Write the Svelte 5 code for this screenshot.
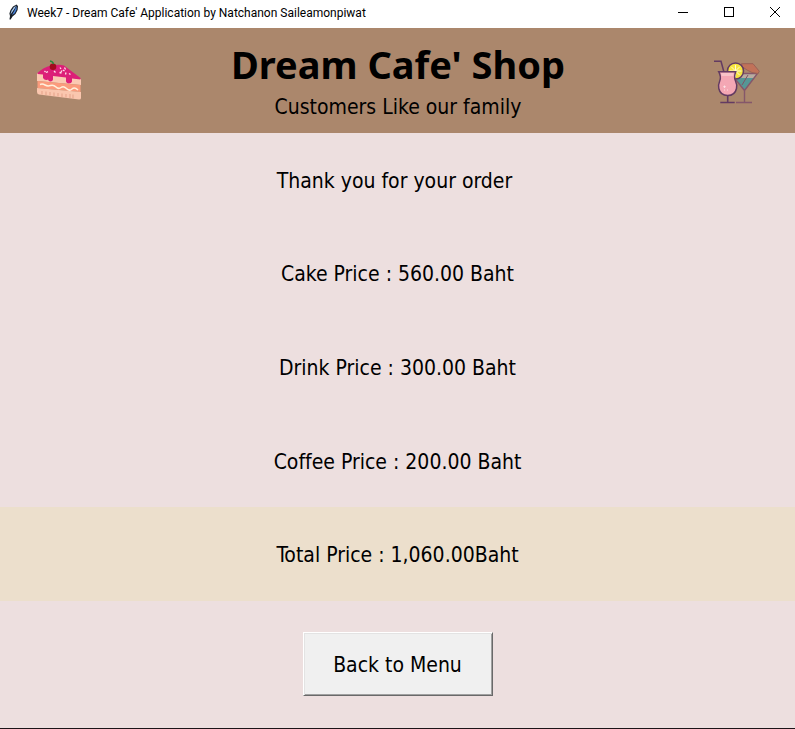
<script>
  const lines = [
    'Thank you for your order ',
    'Cake Price : 560.00 Baht',
    'Drink Price : 300.00 Baht',
    'Coffee Price : 200.00 Baht',
  ];
</script>

<div class="window">
  <div class="titlebar">
    <svg class="feather" viewBox="0 0 16 16" aria-hidden="true">
      <path d="M3.500 15.500 4 12 3.400 9.500 4.500 6 7 2.500 10.500 .4 12 2 11.600 6 9.500 10 6.500 12.500 4.700 15.500Z" fill="#1a2028" />
      <path d="M4.500 10.500 5.500 6.800 8 3.200 10 1.600 8.600 5Z" fill="#a9cdf7" />
      <path d="M5.600 11.300 8.200 6.400 10.600 1.800 10.600 5.500 8.700 9.300Z" fill="#4680d8" />
      <path d="M4.200 15 6 10 9 4.500" fill="none" stroke="#10151c" stroke-width=".6" />
    </svg>
    <span class="caption">Week7 - Dream Cafe' Application by Natchanon Saileamonpiwat</span>
    <div class="controls">
      <button aria-label="Minimize"><svg viewBox="0 0 10 10" shape-rendering="crispEdges"><path d="M0 5.500H10" /></svg></button>
      <button aria-label="Maximize"><svg viewBox="0 0 10 10" shape-rendering="crispEdges"><path d="M.5 .5H9.500V9.500H.5Z" /></svg></button>
      <button aria-label="Close"><svg viewBox="0 0 10 10"><path d="M0 0 10 10M10 0 0 10" /></svg></button>
    </div>
  </div>

  <header>
    <svg class="art" viewBox="0 0 60 56" aria-hidden="true">
      <path d="M7 21 51 27V33L7 29Z" fill="#fbc9b2" />
      <path d="M7.500 29 50.500 33V40L7.500 36Z" fill="#fb9b7c" />
      <path d="M10 32.500Q12.500 31.500 15 33T20.500 33.500T26 35T31 35.500T36.500 36.500T42 37T48 38" fill="none" stroke="#fff0dc" stroke-width="1.500" />
      <path d="M7 36 51 40V46Q51 47.500 49 47.500L9 42.500Q7 42 7 40Z" fill="#fac6ae" />
      <path d="M12 39v3.500M16 39.500v3.500M20 40v3.500M24 40.500v3.500M28 41v3.500M32 41.500v3.500M36 42v3.500M40 42v4M43 42.500v4" stroke="#e8a88f" stroke-width="1.200" />
      <path d="M7.500 21C11 17.500 16 14.500 22 13.500Q29 12 34 13.500L50.500 26V27.500L42 26.500V29.500Q41.500 31.500 39 31.500T36 29.500V25.500L23 24V27.500Q22.500 29.500 20.500 29.500T18 27.500Q15 29 13 26V22.500L7.500 22Z" fill="#dc1f78" />
      <path d="M16 20.500l2-.8M14.500 19l1 1M24 19l1.500 1.500M30 15.500l1 1.500M33 18l1.500 1M29.500 20.500l2 .5M34.500 15.500l1 2M36 20.500l-.5 2M32 18.500l-1 1.500M39 21.500l1.500 1" stroke="#ffe1ec" stroke-width="1.300" />
      <circle cx="23" cy="14.800" r="3.300" fill="#a30a1e" />
      <path d="M23.500 12Q23 9.500 20 9" fill="none" stroke="#24883b" stroke-width="1.400" />
    </svg>
    <div class="brand">
      <h1>Dream Cafe' Shop</h1>
      <p>Customers Like our family</p>
    </div>
    <svg class="art" viewBox="0 0 60 56" aria-hidden="true">
      <path d="M31 22H51L38.500 38.500Z" fill="#b9aca0" />
      <path d="M31 26H48.500L38.500 38.500 31 29Z" fill="#569795" />
      <path d="M36 33 42 23" fill="none" stroke="#805263" />
      <path d="M30 21.500H51.500L38.500 38.500 30 28M38.500 38V50" fill="none" stroke="#85576a" stroke-width="1.400" />
      <path d="M35.500 11.700H47L53.300 19.300 52 21.500 46 20.500Q42 19 36.500 15Z" fill="#c17259" stroke="#9a6257" stroke-width="1" />
      <path d="M30 50.500H46" stroke="#85576a" stroke-width="1.500" />
      <circle cx="29.500" cy="19" r="8" fill="#f5e43f" stroke="#633b62" stroke-width="1.500" />
      <path d="M29.500 13v12M23.500 19h12M25.300 14.800l8.400 8.400M33.700 14.800l-8.400 8.400" stroke="#fffad0" />
      <path d="M8 9.300H15L17.800 19.500" fill="none" stroke="#633b62" stroke-width="1.500" />
      <path d="M12.700 19.700H29.700C28.500 23 28 26 29.500 29C31 32 31 34 30.500 36.500C29.500 41 26 43.500 21.700 43.500S13.800 41 12.800 36.500C12.300 34 12.400 32 13.700 29C15 26 14.500 23 12.700 19.700Z" fill="#f4a7b4" stroke="#633b62" stroke-width="1.500" />
      <path d="M15 21H27.500L27 24H15.600Z" fill="#f8c3c8" />
      <path d="M18.500 33.500v2.500M17.200 34.700h2.600M21.500 37.500v1M18.500 37.500v1" stroke="#fde3e6" stroke-width=".9" />
      <path d="M21.700 43V50M14.300 50.500H28.700" fill="none" stroke="#633b62" stroke-width="1.600" />
    </svg>
  </header>

  <main>
    {#each lines as line}
      <p class="row">{line}</p>
    {/each}
    <p class="row total">Total Price : 1,060.00Baht</p>
    <div class="actions">
      <button class="back">Back to Menu</button>
    </div>
  </main>
</div>

<style>
  .window {
    display: flex;
    flex-direction: column;
    box-sizing: border-box;
    min-height: 100vh;
    border-bottom: 1px solid #1c1418;
    background: #eddfdf;
    color: #000;
    font-family: Tahoma, 'DejaVu Sans Condensed', 'DejaVu Sans', sans-serif;
    font-size: 21px;
    font-variant-ligatures: none;
    line-height: 26px;
  }
  .titlebar {
    display: flex;
    align-items: center;
    height: 28px;
    padding-left: 6px;
    background: #fff;
  }
  .feather {
    width: 16px;
    height: 16px;
    margin-bottom: 4px;
  }
  .caption {
    flex: 1;
    padding-left: 5px;
    margin-bottom: 2px;
    font-family: 'Segoe UI', Roboto, sans-serif;
    font-size: 12px;
    line-height: 16px;
    white-space: nowrap;
  }
  .controls {
    display: flex;
    margin-right: -3px;
    overflow: hidden;
  }
  .controls button {
    display: flex;
    align-items: center;
    justify-content: center;
    width: 46px;
    height: 24px;
    margin-bottom: 4px;
    padding: 0;
    border: 0;
    background: none;
  }
  .controls svg {
    width: 10px;
    height: 10px;
    fill: none;
    stroke: #000;
    stroke-width: 1;
  }
  header {
    display: flex;
    align-items: center;
    justify-content: space-between;
    height: 105px;
    padding: 0 29px 0 30px;
    background: #ab876c;
  }
  .art {
    width: 60px;
    height: 56px;
    margin-bottom: 1px;
  }
  .brand {
    display: flex;
    flex-direction: column;
    gap: 8px;
    text-align: center;
  }
  h1,
  p {
    margin: 0;
  }
  h1 {
    font-family: Tahoma, 'Noto Sans', sans-serif;
    font-size: 38px;
    line-height: 44px;
    font-weight: bold;
  }
  main {
    display: flex;
    flex: 1;
    flex-direction: column;
  }
  .row {
    display: flex;
    flex: 1;
    align-items: center;
    justify-content: center;
    padding-top: 2px;
    white-space: pre;
  }
  .total {
    background: #ecdfcc;
  }
  .actions {
    display: flex;
    justify-content: center;
    padding: 31px 0 32px;
  }
  .back {
    width: 190px;
    height: 64px;
    padding: 2px 0 0;
    border: 1px solid;
    border-color: #fff #696969 #696969 #fff;
    box-shadow: inset 1px 1px #e3e3e3, inset -1px -1px #a0a0a0;
    background: #f0f0f0;
    color: #000;
    font: inherit;
  }
</style>
